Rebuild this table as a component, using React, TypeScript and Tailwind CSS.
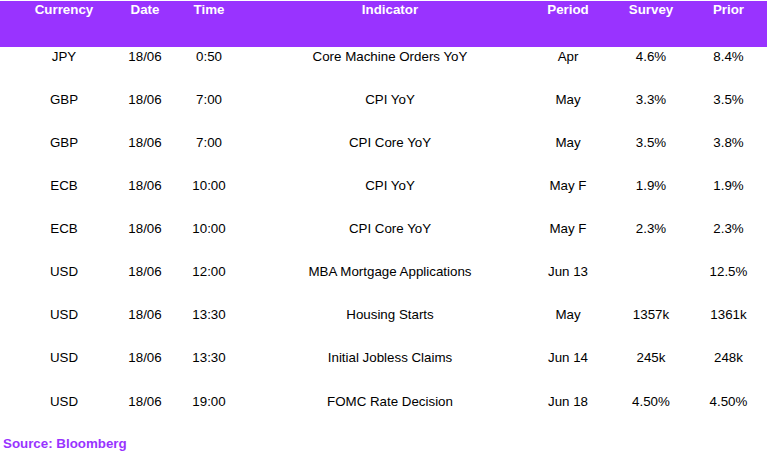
import React from "react";

const cols = ["w-[128px]", "w-[34px]", "w-[94px]", "w-[268px]", "w-[88px]", "w-[78px]", "w-[77px]"];
const headers = ["Currency", "Date", "Time", "Indicator", "Period", "Survey", "Prior"];
const rows: string[][] = [
  ["JPY", "18/06", "0:50", "Core Machine Orders YoY", "Apr", "4.6%", "8.4%"],
  ["GBP", "18/06", "7:00", "CPI YoY", "May", "3.3%", "3.5%"],
  ["GBP", "18/06", "7:00", "CPI Core YoY", "May", "3.5%", "3.8%"],
  ["ECB", "18/06", "10:00", "CPI YoY", "May F", "1.9%", "1.9%"],
  ["ECB", "18/06", "10:00", "CPI Core YoY", "May F", "2.3%", "2.3%"],
  ["USD", "18/06", "12:00", "MBA Mortgage Applications", "Jun 13", "", "12.5%"],
  ["USD", "18/06", "13:30", "Housing Starts", "May", "1357k", "1361k"],
  ["USD", "18/06", "13:30", "Initial Jobless Claims", "Jun 14", "245k", "248k"],
  ["USD", "18/06", "19:00", "FOMC Rate Decision", "Jun 18", "4.50%", "4.50%"],
];

export default function App() {
  return (
    <div
      className="w-[770px] h-[457px] bg-white overflow-hidden pt-[1px]"
      style={{ fontFamily: '"Liberation Sans", Arial, sans-serif' }}
    >
      <div className="flex w-[767px] h-[46px] bg-[#9933ff] pt-[1px] text-white font-bold text-[13.33px] leading-[15px]">
        {headers.map((h, i) => (
          <div key={h} className={`${cols[i]} shrink-0 flex justify-center whitespace-nowrap`}>
            {h}
          </div>
        ))}
      </div>
      {rows.map((r, ri) => (
        <div
          key={ri}
          className={`flex w-[767px] h-[43px] ${ri === rows.length - 1 ? "pt-[3px]" : "pt-[2px]"} text-black text-[13.33px] leading-[15px]`}
        >
          {r.map((c, i) => (
            <div key={i} className={`${cols[i]} shrink-0 flex justify-center whitespace-nowrap`}>
              {c}
            </div>
          ))}
        </div>
      ))}
      <div className="mt-[2px] pl-[3px] text-[#9933ff] font-bold text-[13.33px] leading-[15px]">
        Source: Bloomberg
      </div>
    </div>
  );
}
